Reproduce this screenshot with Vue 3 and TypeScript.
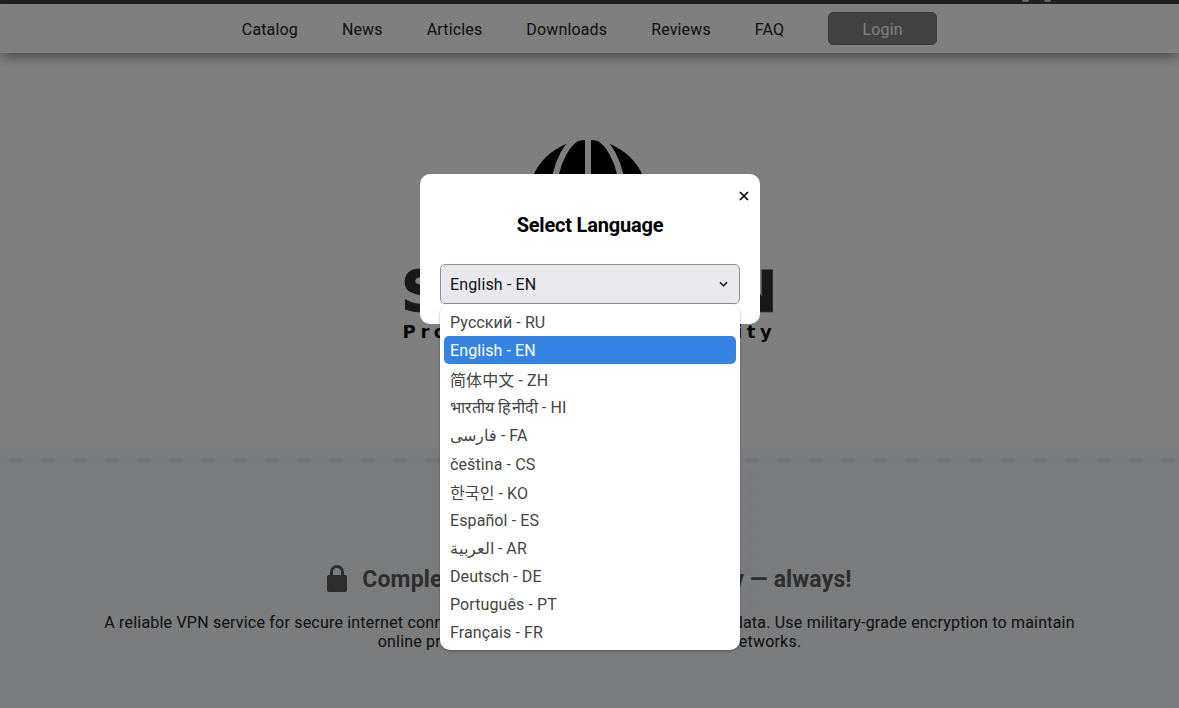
<template>
  <div class="page">
    <div class="topbar">
      <span class="speck"></span>
      <span class="speck"></span>
    </div>
    <header class="header">
      <nav class="nav">
        <a v-for="item in navItems" :key="item" class="navLink">{{ item }}</a>
        <button class="login" type="button">Login</button>
      </nav>
    </header>

    <section class="hero">
      <svg class="globe" viewBox="0 0 120 120" width="120" height="120">
        <circle cx="60" cy="60" r="60" fill="#000" />
        <ellipse cx="60" cy="60" rx="35" ry="65" fill="none" stroke="#fff" stroke-width="6" />
        <line x1="60" y1="0" x2="60" y2="120" stroke="#fff" stroke-width="6" />
        <line x1="0" y1="60" x2="120" y2="60" stroke="#fff" stroke-width="6" />
      </svg>
      <h1 class="brand">SECUREVPN</h1>
      <p class="tagline">Protection and anonymity</p>
    </section>

    <section class="about">
      <div class="dashes"></div>
      <div class="dashesSide"></div>
      <h2 class="aboutTitle">
        <svg class="lock" viewBox="0 0 20 27" width="20" height="27">
          <path d="M4.5 12V7a5.5 5.5 0 0 1 11 0v5" fill="none" stroke="currentColor" stroke-width="3" />
          <rect x="0" y="10" width="20" height="17" rx="2" fill="currentColor" />
        </svg>
        <span>Complete privacy and full anonymity — always!</span>
      </h2>
      <p class="aboutText">
        A reliable VPN service for secure internet connections and protection of your personal data. Use military-grade encryption to maintain<br />
        online privacy and security when on public Wi-Fi networks.
      </p>
    </section>

    <div class="overlay">
      <div class="modal">
        <button class="close" type="button" aria-label="Close">
          <svg viewBox="0 0 10 10" width="10" height="10">
            <path d="M1 1l8 8M9 1l-8 8" stroke="#000" stroke-width="1.7" fill="none" />
          </svg>
        </button>
        <h3 class="modalTitle">Select Language</h3>
        <div class="selectWrap">
          <div class="select">
            <span>{{ current }}</span>
            <svg viewBox="0 0 10 6" width="9" height="6">
              <path d="M1 1l4 4 4-4" stroke="#111" stroke-width="1.6" fill="none" />
            </svg>
          </div>
          <ul class="options">
            <li
              v-for="lang in languages"
              :key="lang.label"
              class="option"
              :class="{ selected: lang.label === current, tall: lang.tall }"
            >
              {{ lang.label }}
            </li>
          </ul>
        </div>
      </div>
    </div>
  </div>
</template>

<script setup lang="ts">
const navItems = ['Catalog', 'News', 'Articles', 'Downloads', 'Reviews', 'FAQ'];

const current = 'English - EN';

const languages: { label: string; tall?: boolean }[] = [
  { label: 'Русский - RU' },
  { label: 'English - EN' },
  { label: '简体中文 - ZH', tall: true },
  { label: 'भारतीय हिनीदी - HI' },
  { label: 'فارسی - FA', tall: true },
  { label: 'čeština - CS' },
  { label: '한국인 - KO' },
  { label: 'Español - ES' },
  { label: 'العربية - AR' },
  { label: 'Deutsch - DE' },
  { label: 'Português - PT' },
  { label: 'Français - FR' },
];
</script>

<style>
html,
body {
  margin: 0;
  overflow: hidden;
  background: #fff;
}
</style>

<style scoped>
.page {
  position: relative;
  height: 708px;
  overflow: hidden;
  font-family: Roboto, "Noto Sans CJK KR", "Noto Sans CJK SC", sans-serif;
  color: #222;
}

.topbar {
  height: 4px;
  background: #444;
  display: flex;
  justify-content: flex-end;
  gap: 15px;
  padding-right: 128px;
  overflow: hidden;
}

.speck {
  width: 7px;
  height: 2px;
  background: #ddd;
  border-radius: 0 0 4px 4px;
}

.header {
  height: 49px;
  background: #fff;
  box-shadow: 0 4px 12px rgba(0, 0, 0, 0.4);
  display: flex;
  justify-content: center;
  position: relative;
}

.nav {
  display: flex;
  align-items: center;
  gap: 44px;
  padding-top: 1px;
}

.navLink {
  font-size: 16px;
  color: #222;
  letter-spacing: 0.15px;
}

.login {
  width: 109px;
  height: 33px;
  margin-top: -1px;
  padding-top: 2px;
  border: 1px solid #777;
  border-radius: 5px;
  background: #848484;
  color: #fff;
  font: inherit;
  font-size: 16px;
  letter-spacing: 0.15px;
}

.hero {
  height: 395px;
  padding-top: 87px;
  box-sizing: border-box;
  display: flex;
  flex-direction: column;
  align-items: center;
}

.globe {
  margin-left: -3px;
}

.brand {
  margin: -1px 0 0 -5px;
  width: 372px;
  text-align: center;
  font-family: "DejaVu Sans", sans-serif;
  font-size: 57px;
  font-weight: 700;
  line-height: 66px;
  letter-spacing: -1px;
  color: #333;
  white-space: nowrap;
  -webkit-text-stroke: 1px #333;
}

.tagline {
  margin: -4px 0 0;
  font-family: "DejaVu Sans", sans-serif;
  font-size: 18px;
  font-weight: 700;
  letter-spacing: 4.6px;
  color: #111;
  white-space: nowrap;
}

.about {
  position: relative;
  height: 260px;
  background: #f6f8fc;
  display: flex;
  flex-direction: column;
  align-items: center;
}

.dashes {
  position: absolute;
  top: 10px;
  left: 0;
  right: 0;
  height: 5px;
  background: repeating-linear-gradient(90deg, transparent 0 8px, #dceaf5 8px 24px, transparent 24px 32px);
  filter: blur(1px);
}

.dashesSide {
  position: absolute;
  top: 22px;
  left: 747px;
  width: 6px;
  height: 148px;
  background: repeating-linear-gradient(180deg, #eef3f8 0 8px, transparent 8px 16px);
  filter: blur(1px);
}

.aboutTitle {
  margin: 117px 0 0;
  display: flex;
  align-items: center;
  gap: 15px;
  font-size: 23px;
  line-height: 30px;
  font-weight: 700;
  letter-spacing: 0.15px;
  color: #5c5c5c;
  white-space: nowrap;
}

.lock {
  color: #5a5a5a;
  margin-top: -3px;
}

.aboutText {
  margin: 18px 0 0;
  width: 1000px;
  text-align: center;
  font-size: 16px;
  line-height: 19px;
  letter-spacing: 0.2px;
  color: #222;
}

.overlay {
  position: absolute;
  inset: 0;
  background: rgba(0, 0, 0, 0.5);
  display: flex;
  justify-content: center;
  padding-left: 1px;
}

.modal {
  position: relative;
  margin-top: 174px;
  width: 340px;
  height: 150px;
  box-sizing: border-box;
  padding: 39px 20px 0;
  background: #fff;
  border-radius: 10px;
  color: #000;
}

.close {
  position: absolute;
  top: 17px;
  right: 11px;
  width: 10px;
  height: 10px;
  padding: 0;
  border: 0;
  background: none;
  display: flex;
}

.modalTitle {
  margin: 0;
  font-size: 20px;
  line-height: 24px;
  font-weight: 700;
  letter-spacing: -0.2px;
  text-align: center;
}

.selectWrap {
  position: relative;
  margin-top: 27px;
}

.select {
  height: 40px;
  box-sizing: border-box;
  padding: 0 11px 0 9px;
  display: flex;
  align-items: center;
  justify-content: space-between;
  border: 1px solid #8f8f9d;
  border-radius: 5px;
  background: #e9e8ed;
  font-size: 16px;
  letter-spacing: 0.15px;
  color: #111;
}

.options {
  position: absolute;
  top: 100%;
  left: 0;
  right: 0;
  margin: 0;
  padding: 4px;
  list-style: none;
  background: #fff;
  border-radius: 10px;
  box-shadow: 0 1px 3px rgba(0, 0, 0, 0.3);
}

.option {
  height: 28px;
  box-sizing: border-box;
  padding: 0 6px;
  display: flex;
  align-items: center;
  border-radius: 5px;
  font-size: 16px;
  letter-spacing: 0.1px;
  color: #444;
  white-space: nowrap;
}

.option.tall {
  height: 29px;
}

.option.selected {
  background: #3584e4;
  color: #fff;
}
</style>
